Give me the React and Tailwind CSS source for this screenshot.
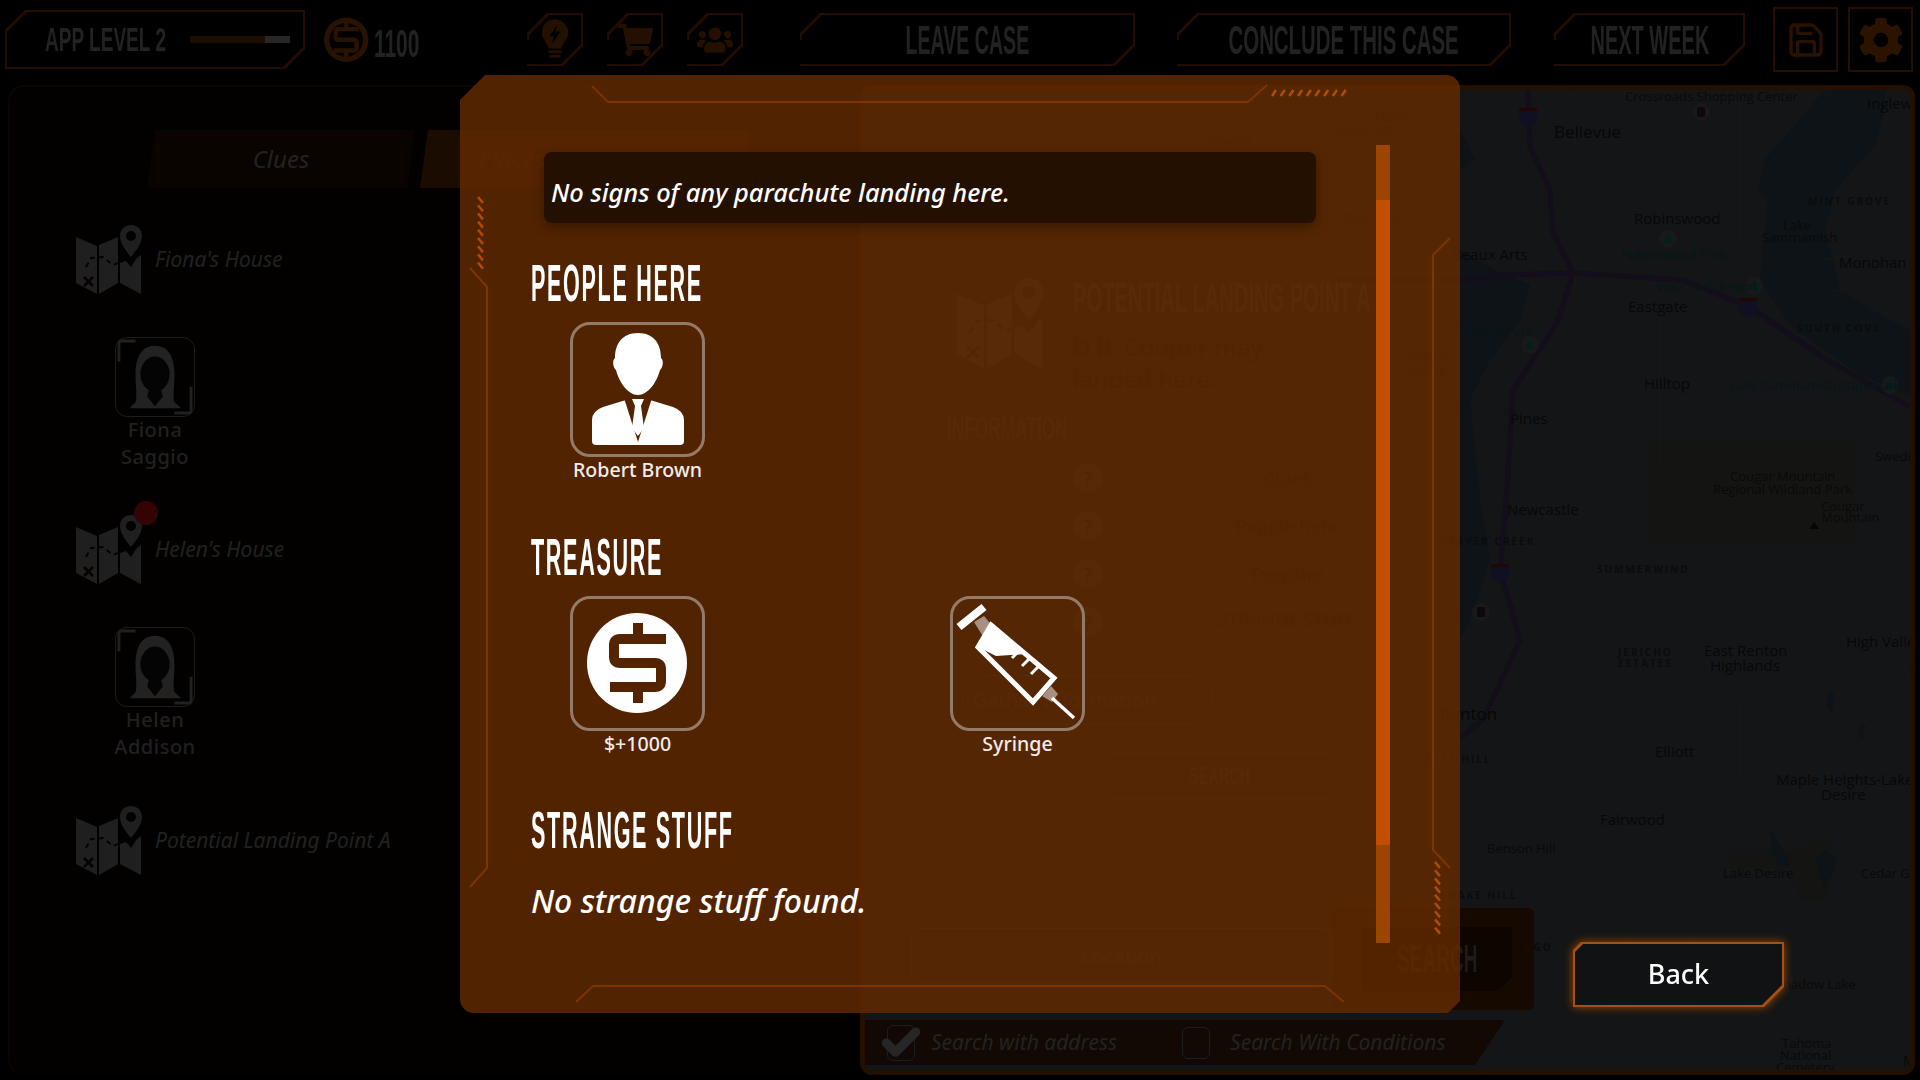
import { FaCog, FaShoppingCart, FaUsers } from "react-icons/fa";
import { Check, Save } from "lucide-react";

const body = "font-['Noto_Sans','Open_Sans',sans-serif]";
const display = "font-['Liberation_Sans',Arial,sans-serif] font-bold";

const mapLabels = [
  { x: 1625, y: 97, t: "Crossroads Shopping Center", k: "sm" },
  { x: 1867, y: 103, t: "Inglewood", k: "md" },
  { x: 1554, y: 132, t: "Bellevue", k: "lg" },
  { x: 1808, y: 201, t: "MINT GROVE", k: "caps" },
  { x: 1634, y: 218, t: "Robinswood", k: "md" },
  { x: 1783, y: 226, t: "Lake", k: "sm" },
  { x: 1762, y: 238, t: "Sammamish", k: "sm" },
  { x: 1621, y: 255, t: "Robinswood Park", k: "park" },
  { x: 1839, y: 262, t: "Monohan", k: "md" },
  { x: 1452, y: 254, t: "Beaux Arts", k: "md" },
  { x: 1656, y: 287, t: "Vasa Park Resort", k: "park" },
  { x: 1628, y: 306, t: "Eastgate", k: "md" },
  { x: 1797, y: 328, t: "SOUTH COVE", k: "caps" },
  { x: 1465, y: 332, t: "Beach Park", k: "park" },
  { x: 1644, y: 383, t: "Hilltop", k: "md" },
  { x: 1729, y: 386, t: "Lake Sammamish State Park", k: "park" },
  { x: 1510, y: 418, t: "Pines", k: "md" },
  { x: 1875, y: 457, t: "Swedish", k: "sm" },
  { x: 1730, y: 477, t: "Cougar Mountain", k: "sm" },
  { x: 1713, y: 490, t: "Regional Wildland Park", k: "sm" },
  { x: 1507, y: 509, t: "Newcastle", k: "md" },
  { x: 1821, y: 507, t: "Cougar", k: "sm" },
  { x: 1821, y: 518, t: "Mountain", k: "sm" },
  { x: 1440, y: 541, t: "BEAVER CREEK", k: "caps" },
  { x: 1597, y: 569, t: "SUMMERWIND", k: "caps" },
  { x: 1618, y: 652, t: "JERICHO", k: "caps" },
  { x: 1618, y: 663, t: "ESTATES", k: "caps" },
  { x: 1704, y: 650, t: "East Renton", k: "md" },
  { x: 1710, y: 665, t: "Highlands", k: "md" },
  { x: 1846, y: 641, t: "High Valley", k: "md" },
  { x: 1440, y: 714, t: "Renton", k: "lg" },
  { x: 1655, y: 751, t: "Elliott", k: "md" },
  { x: 1425, y: 759, t: "EAST HILL", k: "caps" },
  { x: 1776, y: 779, t: "Maple Heights-Lake", k: "md" },
  { x: 1821, y: 794, t: "Desire", k: "md" },
  { x: 1600, y: 819, t: "Fairwood", k: "md" },
  { x: 1487, y: 849, t: "Benson Hill", k: "sm" },
  { x: 1723, y: 874, t: "Lake Desire", k: "sm" },
  { x: 1861, y: 874, t: "Cedar Grove", k: "sm" },
  { x: 1440, y: 895, t: "SNAKE HILL", k: "caps" },
  { x: 1517, y: 947, t: "LAGO", k: "caps" },
  { x: 1776, y: 985, t: "Shadow Lake", k: "sm" },
  { x: 1782, y: 1044, t: "Tahoma", k: "sm" },
  { x: 1780, y: 1056, t: "National", k: "sm" },
  { x: 1776, y: 1068, t: "Cemetery", k: "sm" },
  { x: 1903, y: 1060, t: "Maple", k: "md" },
  { x: 1375, y: 118, t: "Medina", k: "sm" },
  { x: 1336, y: 132, t: "Clyde Hill", k: "sm" },
  { x: 1210, y: 140, t: "Seattle", k: "sm" },
  { x: 1345, y: 218, t: "Roanoke", k: "sm" },
  { x: 1408, y: 355, t: "Mercer", k: "sm" },
  { x: 1408, y: 372, t: "Island", k: "sm" },
];

const labelStyles = {
  lg: "text-[17px] text-[#060707]",
  md: "text-[15px] text-[#070808]",
  sm: "text-[13px] text-[#090a0a]",
  caps: "text-[10px] font-bold tracking-[2px] text-[#0b0c0c]",
  park: "text-[13px] text-[#03181a]",
};

function MapArt() {
  const pins = [
    [1668, 239],
    [1754, 286],
    [1530, 345],
    [1890, 385],
  ];
  const streets = [
    "M1575 90V440", "M1625 90V260", "M1690 90V260", "M1740 90V240", "M1600 300V430", "M1660 300V460",
    "M1540 190H1740", "M1560 240H1720", "M1600 340H1720", "M1470 440H1640", "M1640 560V720", "M1600 570V700",
    "M1510 600H1720", "M1540 680L1690 760", "M1530 800H1700", "M1630 760V1060", "M1530 800V1060", "M1690 820V1060",
    "M1750 760L1890 790", "M1740 700V780", "M1880 600L1910 680", "M1700 540L1790 620", "M1790 620H1900", "M1600 900L1720 1060",
    "M1750 950H1880V1060", "M1820 260L1905 250", "M1830 290L1910 300", "M1570 960L1660 1060",
  ];
  return (
    <svg className="absolute inset-0 h-full w-full" viewBox="865 90 1045 980" preserveAspectRatio="none">
      <rect x="1650" y="440" width="205" height="105" fill="#141512" />
      <rect x="1730" y="850" width="80" height="18" fill="#141512" />
      <path d="M1790 870L1810 840H1830V900L1800 900Z" fill="#141512" />
      <path d="M1825 90L1765 160L1758 190L1768 200L1760 280L1790 325L1860 375L1910 395V330L1880 315L1840 290L1825 230L1835 190L1875 145L1885 110L1885 90Z" fill="#0d1317" />
      <path d="M1460 250L1495 270L1530 285L1520 320L1490 360L1470 400L1480 500L1490 560L1470 620L1460 640Z" fill="#0d1317" />
      <path d="M1460 130L1475 160L1460 170ZM1830 690C1825 700 1825 710 1833 712C1830 700 1840 700 1830 690ZM1860 725L1858 735L1862 740L1866 725ZM1770 830C1770 860 1780 870 1790 865L1775 835ZM1815 860L1825 850L1838 860L1825 890Z" fill="#0d1317" />
      {streets.map((d) => (
        <path key={d} d={d} stroke="#181916" strokeWidth="1" fill="none" />
      ))}
      <path d="M1528 90L1530 147L1550 190L1553 233L1573 273L1557 323L1513 390L1507 490L1500 570L1520 640L1483 720L1460 738" stroke="#130e1a" strokeWidth="5" fill="none" />
      <path d="M1330 280L1460 280L1503 275L1573 273L1683 280L1750 307L1827 360L1910 407" stroke="#130e1a" strokeWidth="5" fill="none" />
      {[[1528, 117], [1748, 307], [1500, 573]].map(([x, y]) => (
        <g key={x}>
          <path d={`M${x - 9} ${y - 9}H${x + 9}V${y + 2}Q${x + 8} ${y + 8} ${x} ${y + 10}Q${x - 8} ${y + 8} ${x - 9} ${y + 2}Z`} fill="#101022" />
          <rect x={x - 9} y={y - 9} width="18" height="3" fill="#220606" />
        </g>
      ))}
      {pins.map(([x, y]) => (
        <g key={x}>
          <circle cx={x} cy={y} r="9" fill="#181919" />
          <path d={`M${x} ${y - 6}L${x + 5} ${y + 4}H${x - 5}Z`} fill="#02201a" />
        </g>
      ))}
      {[[1701, 112], [1481, 612]].map(([x, y]) => (
        <g key={x}>
          <circle cx={x} cy={y} r="9" fill="#181919" />
          <rect x={x - 4} y={y - 5} width="8" height="10" rx="1" fill="#10060d" />
        </g>
      ))}
      <path d="M1814 522L1819 529H1809Z" fill="#050606" />
    </svg>
  );
}

function MapIcon({ className = "", color = "#1f1f1f", hole = "#050200" }) {
  return (
    <svg viewBox="0 0 66 70" className={className} fill={color}>
      <path d="M0 12L21 21V69L0 58Z" />
      <path d="M23 20L42 12V58L23 69Z" />
      <path d="M44 38L50 36L55 42L60 34L65 30V69L44 58Z" />
      <path fillRule="evenodd" d="M55 0C62 0 66 5 66 11C66 19 59 27 55 32C51 27 44 19 44 11C44 5 48 0 55 0ZM55 6A5 5 0 1 0 55 16A5 5 0 1 0 55 6Z" />
      <path d="M8 52L17 61M17 52L8 61" stroke={hole} strokeWidth="2.5" />
      <path d="M10 42L15 33L27 32L37 40L47 36" stroke={hole} strokeWidth="2" strokeDasharray="5 4" fill="none" />
    </svg>
  );
}

function PersonCard() {
  return (
    <div className="relative h-[80px] w-[80px] rounded-[12px] border border-[#1c1c1c]">
      <svg viewBox="0 0 80 80" className="absolute inset-0 h-full w-full">
        <path d="M20 3H5Q3 3 3 6V24M60 77H75Q77 77 77 74V50" stroke="#202020" strokeWidth="3" fill="none" />
        <path d="M40 8C26 8 20 20 20 38C20 50 22 60 20 66L14 72H67L60 66C58 60 60 50 60 38C60 20 54 8 40 8Z" fill="#222" />
        <ellipse cx="40" cy="37" rx="15" ry="18" fill="#040404" />
        <path d="M34 52H46L48 60L40 70L32 60Z" fill="#040404" />
      </svg>
    </div>
  );
}

function PlaceRow({ title, lines, dot, className }) {
  return (
    <div className={`relative flex h-[70px] items-center pl-[66px] ${className}`}>
      <MapIcon className="h-[70px] w-[66px]" />
      {dot && <div className="absolute left-[124px] top-[-14px] h-[24px] w-[24px] rounded-full bg-[#340404]" />}
      <span className={`${body} ml-[13px] w-[337px] text-[21px] italic text-[#212121]`}>{title}</span>
      <div className={`${body} text-[17px] italic leading-[33px] text-[#0c0501]`}>
        {lines.map((l) => (
          <div key={l}>{l}</div>
        ))}
      </div>
    </div>
  );
}

function PersonRow({ first, last, className }) {
  return (
    <div className={`ml-[105px] flex w-[80px] flex-col items-center ${className}`}>
      <PersonCard />
      <div className={`${body} mb-[1px] mt-[-1px] text-center text-[20px] font-medium leading-[27px] tracking-[0.5px] text-[#202020]`}>
        {first}
        <br />
        {last}
      </div>
    </div>
  );
}

function LeftPanel() {
  return (
    <section className="ml-[8px] flex w-[844px] flex-col rounded-[16px] border-t-2 border-l-2 border-[#0e0500] bg-[#030100] pt-[43px]">
      <div className="flex">
        <div className="ml-[137px] flex h-[58px] w-[268px] items-center justify-center bg-[#0a0400] [clip-path:polygon(8px_0,100%_0,calc(100%-8px)_100%,0_100%)]">
          <span className={`${body} text-[24px] italic text-[#222]`}>Clues</span>
        </div>
        <div className="ml-[5px] flex h-[58px] w-[330px] items-center bg-[#1b0c00] pl-[58px] [clip-path:polygon(8px_0,100%_0,calc(100%-8px)_100%,0_100%)]">
          <span className={`${body} text-[24px] italic text-[#301700]`}>Places</span>
        </div>
      </div>
      <PlaceRow
        className="mt-[37px]"
        title="Fiona's House"
        lines={["(Place fully investigated: Yes)", "(People fully investigated: Yes)"]}
      />
      <PersonRow className="mt-[42px]" first="Fiona" last="Saggio" />
      <PlaceRow
        className="mt-[44px]"
        dot
        title="Helen's House"
        lines={["(Place fully investigated: Unknown)", "(People fully investigated: Unknown)"]}
      />
      <PersonRow className="mt-[42px]" first="Helen" last="Addison" />
      <PlaceRow
        className="mt-[45px]"
        title="Potential Landing Point A"
        lines={["(Place fully investigated: Unknown)", "(People fully investigated: Unknown)"]}
      />
    </section>
  );
}

function DetailsPanel() {
  const rows = ["Clues", "People here", "Treasure"];
  return (
    <div className="relative flex h-full w-full flex-col">
      <div className="ml-[85px] mt-[188px] flex">
        <MapIcon className="h-[92px] w-[100px]" color="#303030" hole="#151515" />
        <div className="ml-[23px]">
          <div className={`${display} h-[40px] origin-left scale-x-[0.48] whitespace-nowrap text-[42px] leading-[40px] text-[#333]`}>
            POTENTIAL LANDING POINT A
          </div>
          <div className={`${body} mt-[13px] w-[220px] text-[24px] font-medium leading-[32px] text-[#080808]`}>
            D.B. Cooper may landed here.
          </div>
        </div>
      </div>
      <div className={`${display} ml-[82px] mt-[9px] h-[34px] origin-left scale-x-[0.54] whitespace-nowrap text-[32px] text-[#2c2c2c]`}>
        INFORMATION
      </div>
      <div className="ml-[208px] mt-[25px] flex w-[398px] flex-col gap-[18px]">
        {rows.map((r) => (
          <div key={r} className="flex h-[30px] items-center">
            <span className="flex h-[30px] w-[30px] items-center justify-center rounded-full bg-[#2a2a2a] text-[18px] font-bold text-[#0d0d0d]">?</span>
            <span className={`${body} flex-1 text-center text-[18px] font-medium text-[#080808]`}>{r}</span>
          </div>
        ))}
        <div className="flex h-[42px] items-start">
          <span className="flex h-[30px] w-[30px] items-center justify-center rounded-full bg-[#2a2a2a] text-[18px] font-bold text-[#0d0d0d]">?</span>
          <span className={`${body} flex-1 text-center text-[18px] font-medium leading-[24px] text-[#080808]`}>STRANGE STUFF</span>
        </div>
      </div>
      <div className={`${body} ml-[97px] mt-[26px] flex h-[50px] w-[250px] items-center rounded-[20px] border border-[#2a2a2a] pl-[10px] text-[20px] text-[#2a2a2a]`}>
        Gather Information
      </div>
      <div className={`${display} ml-[225px] mt-[28px] flex h-[46px] w-[260px] items-center justify-center rounded-[20px] border border-[#2a2a2a] text-[24px] text-[#2c2c2c]`}>
        <span className="scale-x-[0.6]">SEARCH</span>
      </div>
      <div className="mt-auto flex h-[102px] items-start">
        <div className={`${body} ml-[46px] mt-[20px] flex h-[55px] w-[421px] items-center justify-center rounded-[10px] border border-[#2a2a2a] text-[20px] text-[#2a2a2a]`}>
          Location
        </div>
        <div className="flex h-[102px] w-[202px] items-center justify-center rounded-[6px] bg-[#160900]">
          <div className="ml-[8px] flex h-[64px] w-[150px] items-center justify-center bg-[#0d0500] [clip-path:polygon(0_0,100%_0,100%_calc(100%-14px),calc(100%-14px)_100%,0_100%)]">
            <span className={`${display} scale-x-[0.5] text-[38px] text-[#1c1c1c]`}>SEARCH</span>
          </div>
        </div>
      </div>
      <div className={`${body} mb-[5px] mt-[10px] flex h-[45px] w-[640px] items-center bg-[#120904] text-[21px] italic text-[#222] [clip-path:polygon(0_0,100%_0,calc(100%-30px)_100%,0_100%)]`}>
        <span className="ml-[22px] flex h-[36px] w-[28px] items-center justify-center rounded-[6px] border border-[#1d1d1d]">
          <Check className="h-[44px] w-[44px] shrink-0 text-[#262626]" strokeWidth={5} />
        </span>
        <span className="ml-[16px]">Search with address</span>
        <span className="ml-[65px] h-[32px] w-[28px] rounded-[6px] border border-[#1d1d1d]" />
        <span className="ml-[20px]">Search With Conditions</span>
      </div>
    </div>
  );
}

function MapPanel() {
  return (
    <section className="relative ml-[8px] w-[1055px] overflow-hidden rounded-[12px] border-[5px] border-[#241000] bg-[#141516]">
      <MapArt />
      {mapLabels.map((l) => (
        <span
          key={l.t + l.y}
          className={`absolute -translate-y-1/2 whitespace-nowrap font-['Open_Sans',sans-serif] ${labelStyles[l.k]}`}
          style={{ left: l.x - 865, top: l.y - 90 }}
        >
          {l.t}
        </span>
      ))}
      <DetailsPanel />
    </section>
  );
}

function Bulb() {
  return (
    <svg viewBox="0 0 30 44" className="h-[42px] w-[28px]" fill="#241000">
      <path fillRule="evenodd" d="M15 0C7 0 1 6 1 14C1 21 7 25 8 31H22C23 25 29 21 29 14C29 6 23 0 15 0ZM17 6L9 18H14L12 26L21 13H16Z" />
      <rect x="8" y="33" width="14" height="3" />
      <rect x="9" y="38" width="12" height="3" />
    </svg>
  );
}

function Coin({ className }) {
  return (
    <svg viewBox="0 0 135 135" className={className}>
      <circle cx="68" cy="67" r="50" fill="#2a1200" />
      <circle cx="68" cy="67" r="38" fill="#030100" />
      <path d="M96 43H50Q44 43 44 49V61Q44 67 50 67H85Q91 67 91 73V85Q91 91 85 91H40M68 27V43M68 91V107" stroke="#2a1200" strokeWidth="10" fill="none" />
    </svg>
  );
}

function ChamferBox({ className, open, children }) {
  return (
    <div className={`relative bg-[#220d00] p-[2px] [clip-path:polygon(20px_0,100%_0,100%_calc(100%-20px),calc(100%-20px)_100%,0_100%,0_20px)] ${className}`}>
      <div className="flex h-full w-full items-center justify-center bg-black [clip-path:polygon(20px_0,100%_0,100%_calc(100%-20px),calc(100%-20px)_100%,0_100%,0_20px)]">
        {children}
      </div>
      {open && <div className="absolute bottom-[2px] left-0 h-[24px] w-[2px] bg-black" />}
    </div>
  );
}

function TopBar() {
  return (
    <header className="flex h-[85px] shrink-0 items-start pt-[13px]">
      <ChamferBox className="ml-[5px] mt-[-3px] h-[59px] w-[300px]">
        <div className="flex w-full items-center pl-[38px]">
          <span className={`${display} w-[145px] origin-left scale-x-[0.56] whitespace-nowrap text-[34px] text-[#222]`}>APP LEVEL 2</span>
          <div className="flex h-[7px] w-[100px]">
            <div className="w-[75px] bg-[#1e0c00]" />
            <div className="w-[25px] bg-[#262626]" />
          </div>
        </div>
      </ChamferBox>
      <Coin className="ml-[11px] mt-[-3px] h-[60px] w-[60px]" />
      <span className={`${display} ml-[-2px] mt-[3px] w-[50px] origin-left scale-x-[0.55] text-[38px] text-[#222]`}>1100</span>
      <ChamferBox open className="ml-[103px] h-[53px] w-[56px]">
        <Bulb />
      </ChamferBox>
      <ChamferBox open className="ml-[24px] h-[53px] w-[56px]">
        <FaShoppingCart className="h-[36px] w-[36px] text-[#241000]" />
      </ChamferBox>
      <ChamferBox open className="ml-[24px] h-[53px] w-[56px]">
        <FaUsers className="h-[36px] w-[36px] text-[#241000]" />
      </ChamferBox>
      <ChamferBox open className="ml-[57px] h-[53px] w-[335px]">
        <span className={`${display} scale-x-[0.49] whitespace-nowrap text-[40px] text-[#222]`}>LEAVE CASE</span>
      </ChamferBox>
      <ChamferBox open className="ml-[42px] h-[53px] w-[334px]">
        <span className={`${display} scale-x-[0.51] whitespace-nowrap text-[40px] text-[#222]`}>CONCLUDE THIS CASE</span>
      </ChamferBox>
      <ChamferBox open className="ml-[43px] h-[53px] w-[191px]">
        <span className={`${display} scale-x-[0.5] whitespace-nowrap text-[40px] text-[#222]`}>NEXT WEEK</span>
      </ChamferBox>
      <div className="ml-[28px] mt-[-6px] flex h-[65px] w-[65px] items-center justify-center border-2 border-[#241000]">
        <Save className="h-[44px] w-[40px] text-[#2a1200]" strokeWidth={2} />
      </div>
      <div className="ml-[10px] mt-[-6px] flex h-[65px] w-[65px] items-center justify-center border-2 border-[#241000]">
        <FaCog className="h-[46px] w-[46px] text-[#2c1300]" />
      </div>
    </header>
  );
}

function Ticks({ x, y, dx, dy, lean, color = "#b04d00" }) {
  return Array.from({ length: 9 }).map((_, i) => (
    <path
      key={i}
      d={`M${x + dx * i} ${y + dy * i}l${lean[0]} ${lean[1]}`}
      stroke={color}
      strokeWidth="2.5"
    />
  ));
}

// lines and tick marks drawn on the modal, 1000x938 canvas
function ModalChrome() {
  return (
    <svg viewBox="0 0 1000 938" className="pointer-events-none absolute inset-0 h-full w-full" fill="none">
      <g stroke="#7a3500" strokeWidth="2">
        <path d="M132 11L148 27H788L807 10" />
        <path d="M10 193L27 212V793L10 812" />
        <path d="M990 163L973 180V775L990 793" />
        <path d="M116 927L133 911H865L884 927" />
      </g>
      <Ticks x={812} y={21} dx={8.7} dy={0} lean={[4, -6]} />
      <Ticks x={18} y={122} dx={0} dy={8.2} lean={[5, 6]} />
      <Ticks x={975} y={787} dx={0} dy={8.2} lean={[5, 6]} />
    </svg>
  );
}

function RobertIcon() {
  return (
    <svg viewBox="0 0 135 135" className="h-full w-full">
      <path d="M68 11C52 11 45 22 45 36C42 38 43 46 46 48C49 60 58 73 68 73C78 73 87 60 90 48C93 46 94 38 91 36C91 22 84 11 68 11Z" fill="#fff" />
      <path d="M22 119V98Q22 89 33 85L56 78H80L103 85Q114 89 114 98V119Q114 123 110 123H26Q22 123 22 119Z" fill="#fff" />
      <path d="M54 76H82L68 120Z" fill="#542400" />
      <path d="M62 77H74L71 84L74 106L68 114L62 106L65 84Z" fill="#fff" />
    </svg>
  );
}

function CoinIcon() {
  return (
    <svg viewBox="0 0 135 135" className="h-full w-full">
      <ellipse cx="67" cy="67" rx="50" ry="50" fill="#fff" />
      <path d="M96 43H50Q44 43 44 49V61Q44 67 50 67H85Q91 67 91 73V85Q91 91 85 91H40M68 27V43M68 91V107" stroke="#542400" strokeWidth="10" fill="none" />
    </svg>
  );
}

function SyringeIcon() {
  return (
    <svg viewBox="0 0 135 135" className="h-full w-full">
      <path d="M9 31L34 11" stroke="#fff" strokeWidth="8" />
      <path d="M24 26L34 20L44 32L34 42Z" fill="#a89080" />
      <path d="M41 29L104 82L83 106L28 51Z" fill="none" stroke="#fff" strokeWidth="5" />
      <path d="M41 29L76 58L46 60L28 51Z" fill="#fff" />
      <path d="M70 54L62 62M80 62L72 70M89 70L81 78" stroke="#fff" strokeWidth="3" />
      <path d="M92 100L101 90L108 98L102 106Z" fill="#a89080" />
      <path d="M102 102L124 122" stroke="#fff" strokeWidth="3.5" />
    </svg>
  );
}

function ItemCard({ name, children }) {
  return (
    <div className="flex w-[135px] flex-col items-center">
      <div className="h-[135px] w-[135px] rounded-[20px] border-[3px] border-[#947a68]">
        <div className="m-[-3px] h-[135px] w-[135px]">{children}</div>
      </div>
      <div className={`${body} h-[26px] whitespace-nowrap text-[19.6px] font-medium leading-[25px] text-[#f2ece8]`}>{name}</div>
    </div>
  );
}

function SectionTitle({ children, className }) {
  return (
    <h2 className={`${display} h-[48px] origin-left scale-x-[0.415] whitespace-nowrap text-[52px] leading-[48px] tracking-[4px] text-white ${className}`}>
      {children}
    </h2>
  );
}

function Modal() {
  return (
    <div className="absolute left-[460px] top-[75px] flex h-[938px] w-[1000px] rounded-[14px] bg-[#602900]/85 [clip-path:polygon(25px_0,100%_0,100%_calc(100%-12px),calc(100%-12px)_100%,0_100%,0_25px)]">
      <ModalChrome />
      <div className="relative w-[916px] pl-[71px] pt-[77px]">
        <div className="ml-[13px] flex h-[71px] w-[772px] items-center rounded-[8px] bg-[#241000] pl-[7px] pt-[10px] shadow-[0_4px_12px_rgba(0,0,0,0.35)]">
          <span className={`${body} text-[25.4px] font-medium italic text-white`}>No signs of any parachute landing here.</span>
        </div>
        <SectionTitle className="mt-[36px]">PEOPLE HERE</SectionTitle>
        <div className="ml-[39px] mt-[15px] grid grid-cols-[380px_135px]">
          <ItemCard name="Robert Brown">
            <RobertIcon />
          </ItemCard>
        </div>
        <SectionTitle className="mt-[50px]">TREASURE</SectionTitle>
        <div className="ml-[39px] mt-[15px] grid grid-cols-[380px_135px]">
          <ItemCard name="$+1000">
            <CoinIcon />
          </ItemCard>
          <ItemCard name="Syringe">
            <SyringeIcon />
          </ItemCard>
        </div>
        <SectionTitle className="mt-[49px]">STRANGE STUFF</SectionTitle>
        <p className={`${body} mt-[27px] text-[32px] font-medium italic leading-[40px] text-white`}>No strange stuff found.</p>
      </div>
      <div className="relative mt-[70px] h-[798px] w-[14px] bg-[#9c4500]">
        <div className="mt-[55px] h-[645px] bg-[#c05000]" />
      </div>
    </div>
  );
}

function BackButton() {
  return (
    <div className="absolute left-[1573px] top-[942px] drop-shadow-[0_0_5px_#a04a00]">
      <div className="h-[65px] w-[211px] bg-[#a8500f] p-[2px] [clip-path:polygon(8px_0,100%_0,100%_calc(100%-20px),calc(100%-20px)_100%,0_100%,0_8px)]">
        <div className="flex h-full w-full items-center justify-center bg-[#111213] [clip-path:polygon(8px_0,100%_0,100%_calc(100%-20px),calc(100%-20px)_100%,0_100%,0_8px)]">
          <span className={`${body} text-[27px] font-medium text-white`}>Back</span>
        </div>
      </div>
    </div>
  );
}

export default function App() {
  return (
    <div className="relative flex h-[1080px] w-[1920px] flex-col overflow-hidden bg-black">
      <TopBar />
      <main className="flex h-[990px]">
        <LeftPanel />
        <MapPanel />
      </main>
      <Modal />
      <BackButton />
    </div>
  );
}
